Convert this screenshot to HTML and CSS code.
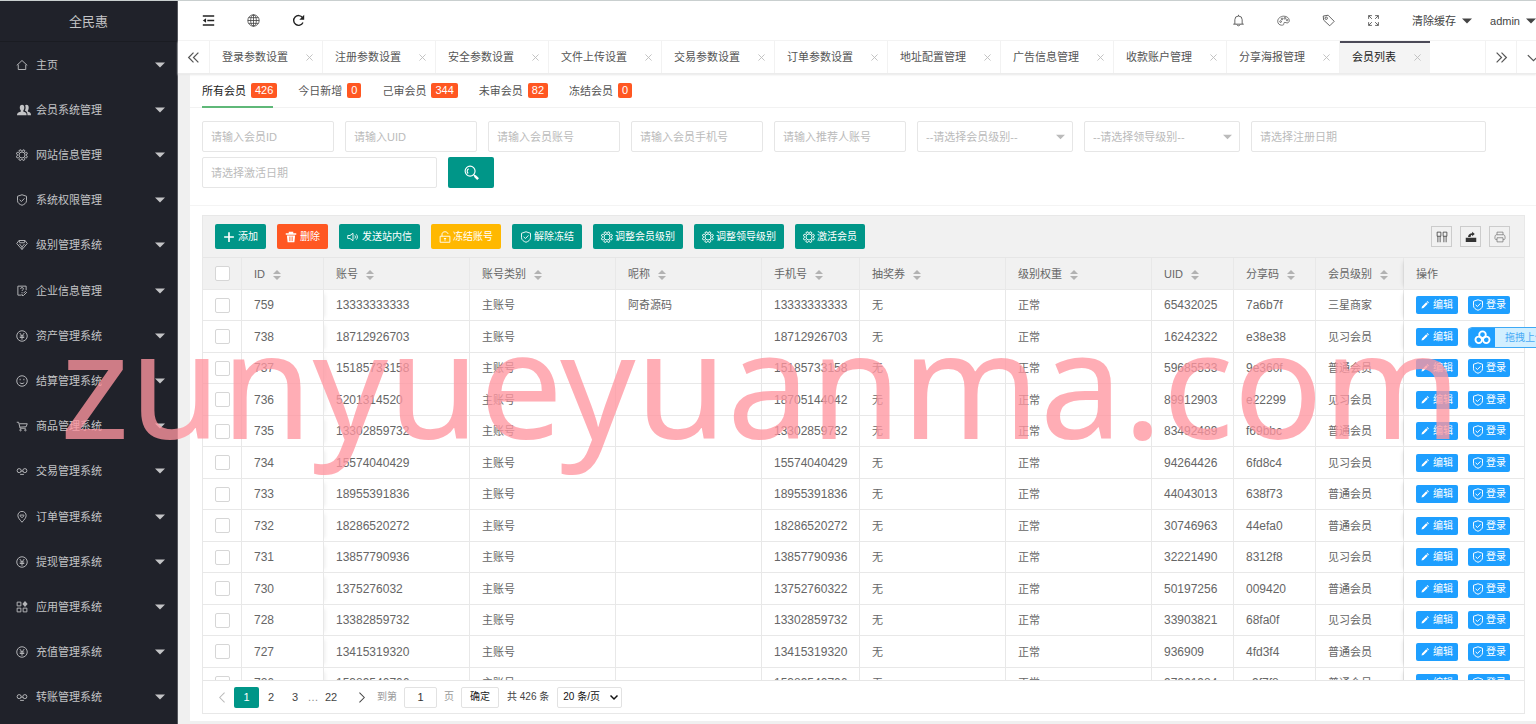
FILE: index.html
```html
<!DOCTYPE html>
<html lang="zh-CN">
<head>
<meta charset="utf-8">
<title>全民惠</title>
<link rel="stylesheet" href="styles.css">
</head>
<body>
<svg class="sprite" aria-hidden="true">
  <symbol id="home" viewBox="0 0 16 16"><path d="M1 8.500 8 2l7 6.500M3 7.500V14h10V7.500"/></symbol>
  <symbol id="users" viewBox="0 0 16 16"><path class="fill" d="M0 14c0-2.500 1-3 4-4 .6-.3.6-1 0-2-1.500-2.500-.8-6 1.800-6s3.300 3.500 1.800 6c-.6 1-.6 1.700 0 2 3 1 3.400 1.500 3.400 4zM12 14h4c0-2.500-.6-3-3.200-4-.6-.3-.6-1 0-2 1.300-2.500.6-6-1.800-6-.8 0-1.300.3-1.700.8 1 2 .5 4.200-.3 5.700 2.200.9 3 2.500 3 5.500z"/></symbol>
  <symbol id="gear" viewBox="0 0 16 16"><circle cx="8" cy="8" r="4"/><path d="m6.500 1 .6 1.800h1.800L9.500 1l2.300 1-.5 1.800 1.200 1.100 1.700-.6 1 2.400-1.700.9v1.100l1.600 1-1 2.300-1.800-.5-1.100 1.100.5 1.700-2.300 1-1-1.600H7.100l-.9 1.600-2.400-1 .6-1.700-1.200-1.100-1.700.5-1-2.300 1.700-1V7.500L.5 6.600l1-2.300 1.800.5 1.100-1.100L3.900 2z"/></symbol>
  <symbol id="shield" viewBox="0 0 16 16"><path d="M8 1 14 3v6c0 3-3 5-6 6-3-1-6-3-6-6V3zM4.800 7.800 7.300 10l4-4.200"/></symbol>
  <symbol id="diamond" viewBox="0 0 16 16"><path d="M4 2h8l3 4-7 8-7-8zM4.500 6.500 8 10.500l3.500-4M4 2l1 3h6l1-3M8 10v4"/></symbol>
  <symbol id="note" viewBox="0 0 16 16"><path d="M13.500 7V1.500h-11v12H7M6 5c0-2 4-2 4 0 0 1.500-2 1.500-2 3M8 9.500V11M14.500 9.500 10 14H8v-2M10 11l3-3"/></symbol>
  <symbol id="yen" viewBox="0 0 16 16"><circle cx="8" cy="8" r="7"/><path d="m5 4 3 4 3-4M5 8h6M5 10h6M8 8v5"/></symbol>
  <symbol id="face" viewBox="0 0 16 16"><circle cx="8" cy="8" r="7"/><path d="M5.500 5v2M10.500 5v2M5 10c1.500 2 4.500 2 6 0"/></symbol>
  <symbol id="cart" viewBox="0 0 16 16"><path d="M1 3h2.500l2 8H13M4.500 5H15l-1.500 4-8.500.5"/><circle cx="6" cy="13.500" r="1"/><circle cx="12.500" cy="13.500" r="1"/></symbol>
  <symbol id="link" viewBox="0 0 16 16"><circle cx="4.200" cy="7.500" r="2.700"/><circle cx="11.800" cy="7.500" r="2.700"/><path d="M6.500 9c1-2 2-2 3 0M5.500 12.500h5"/></symbol>
  <symbol id="pin" viewBox="0 0 16 16"><path d="M8 15C5 11.500 2.500 9 2.500 6a5.500 5.500 0 0 1 11 0c0 3-2.500 5.500-5.500 9z"/><path d="M8 9 5.500 6.500C5.500 4.500 7.500 4.500 8 6c.5-1.500 2.500-1.500 2.500.5z"/></symbol>
  <symbol id="apps" viewBox="0 0 16 16"><path d="M1.500 1.500h5v5h-5zM1.500 9.500h5v5h-5zM9.500 9.500h5v5h-5z"/><path class="fill" d="m12 0 3.500 4L12 8 8.500 4z"/></symbol>
  <symbol id="caret" viewBox="0 0 10 6"><path class="fill" d="M0 .5h10L5 5.500z"/></symbol>
  <symbol id="shrink" viewBox="0 0 16 16"><path d="M1 2.500h14M6.500 8H15M1 13.500h14"/><path class="fill" d="M5 5.300v5.400L1 8z"/></symbol>
  <symbol id="globe" viewBox="0 0 16 16"><circle cx="8" cy="8" r="7"/><ellipse cx="8" cy="8" rx="3.500" ry="7"/><path d="M8 1v14M1 8h14M2 4.500h12M2 11.500h12"/></symbol>
  <symbol id="reload" viewBox="0 0 16 16"><path d="M13.500 10.500A6 6 0 1 1 13 4.500"/><path class="fill" d="M15 1v6H9z"/></symbol>
  <symbol id="bell" viewBox="0 0 16 16"><path d="M1.500 12.500h13M3.500 12.500V7a4.500 4.500 0 0 1 9 0v5.500M8 2.500V1M6 13c.5 2 3.500 2 4 0"/></symbol>
  <symbol id="palette" viewBox="0 0 18 16"><path d="M6.500 14.500C3 14.500 1 12 1 9c0-4 4-7 8.500-7 4 0 7.500 2.500 7.500 6 0 3-2.500 4-4.500 3-2.500-1-3.500 0-3 1.500.4 1.300-1.300 2-3 2z"/><circle cx="5" cy="9.500" r="1.200"/><circle cx="7" cy="5.800" r="1.200"/><circle cx="11" cy="5" r="1.200"/><circle cx="14" cy="7.500" r="1"/></symbol>
  <symbol id="tag" viewBox="0 0 16 16"><path d="m1.500 2.500 6-1 7.500 7.500-5.500 5.500L2 7.500z"/><circle cx="5.200" cy="5.200" r="1.500"/></symbol>
  <symbol id="full" viewBox="0 0 16 16"><path d="M2 6V2h4M2 2l4 4M10 2h4v4M14 2l-4 4M2 10v4h4M2 14l4-4M14 10v4h-4M14 14l-4-4"/></symbol>
  <symbol id="dleft" viewBox="0 0 16 16"><path d="M8 2 2 8l6 6M14 2 8 8l6 6"/></symbol>
  <symbol id="dright" viewBox="0 0 16 16"><path d="m2 2 6 6-6 6M8 2l6 6-6 6"/></symbol>
  <symbol id="down" viewBox="0 0 16 16"><path d="m1 5 7 7 7-7"/></symbol>
  <symbol id="left" viewBox="0 0 16 16"><path d="m11 1-7 7 7 7"/></symbol>
  <symbol id="right" viewBox="0 0 16 16"><path d="m5 1 7 7-7 7"/></symbol>
  <symbol id="x" viewBox="0 0 16 16"><path d="m1 1 14 14M15 1 1 15"/></symbol>
  <symbol id="search" viewBox="0 0 16 16"><circle cx="6.500" cy="6.500" r="5.300"/><path d="M4.500 9A3 3 0 0 1 5 4M10 10l2 2"/><path d="m11.500 11.500 3.500 3.500" stroke-width="2.600"/></symbol>
  <symbol id="plus" viewBox="0 0 16 16"><path stroke-width="2.200" d="M8 1.500v13M1.500 8h13"/></symbol>
  <symbol id="trash" viewBox="0 0 16 16"><path class="fill" d="M5 1h6v2h4v2H1V3h4zM2.500 6h11L12.500 15h-9z"/><path class="cut" d="M6.500 7.500v6M9.500 7.500v6"/></symbol>
  <symbol id="speaker" viewBox="0 0 16 16"><path d="M1 6h3L8 3v10L4 10H1zM10.500 6c1 1.200 1 2.800 0 4M12.500 4.500c1.800 2 1.800 5 0 7"/></symbol>
  <symbol id="lock" viewBox="0 0 16 16"><path d="M1.500 7h13v8h-13zM4 7V4c0-4 8-4 8 0M8 9.500V13M6.500 10h3"/></symbol>
  <symbol id="pen" viewBox="0 0 16 16"><path class="fill" d="m1 15 1-4 8.500-8.500 3 3L5 14zM11.500 1.500 12.800.2l3 3-1.300 1.300z"/></symbol>
  <symbol id="cols" viewBox="0 0 16 16"><path d="M1.500 1.500h5V7h-5zM9.500 1.500h5V7h-5zM2.500 7v8M5.500 7v8M10.500 7v8M13.500 7v8"/></symbol>
  <symbol id="export" viewBox="0 0 16 16"><path class="fill" d="M1 9h14v5.500H1zM9.500 1 13 4l-3.500 3V5.200C8 5.200 7.500 6 7.500 8H4c.5-3.500 2.500-5 5.500-5z"/></symbol>
  <symbol id="print" viewBox="0 0 16 16"><path d="M4 5V1.500h8V5M4 11.500H2.500c-2 0-1.500-6.500.5-6.500h10c2 0 2.500 6.500.5 6.500H12M4 9h8v5.500H4z"/></symbol>
  <symbol id="sort" viewBox="0 0 8 12"><path class="fill" d="M0 5 4 1l4 4zM0 7h8l-4 4z"/></symbol>
  <symbol id="cloud" viewBox="0 0 18 16"><circle cx="9" cy="5" r="3.500"/><circle cx="5" cy="10.500" r="3.500"/><circle cx="13" cy="10.500" r="3.500"/></symbol>
</svg>

<div class="app">
  <aside class="side">
    <div class="brand">全民惠</div>
    <nav class="menu">
      <a href="#"><svg class="ico"><use href="#home"/></svg><span>主页</span><svg class="caret"><use href="#caret"/></svg></a>
      <a href="#"><svg class="ico wide"><use href="#users"/></svg><span>会员系统管理</span><svg class="caret"><use href="#caret"/></svg></a>
      <a href="#"><svg class="ico"><use href="#gear"/></svg><span>网站信息管理</span><svg class="caret"><use href="#caret"/></svg></a>
      <a href="#"><svg class="ico"><use href="#shield"/></svg><span>系统权限管理</span><svg class="caret"><use href="#caret"/></svg></a>
      <a href="#"><svg class="ico"><use href="#diamond"/></svg><span>级别管理系统</span><svg class="caret"><use href="#caret"/></svg></a>
      <a href="#"><svg class="ico"><use href="#note"/></svg><span>企业信息管理</span><svg class="caret"><use href="#caret"/></svg></a>
      <a href="#"><svg class="ico"><use href="#yen"/></svg><span>资产管理系统</span><svg class="caret"><use href="#caret"/></svg></a>
      <a href="#"><svg class="ico"><use href="#face"/></svg><span>结算管理系统</span><svg class="caret"><use href="#caret"/></svg></a>
      <a href="#"><svg class="ico"><use href="#cart"/></svg><span>商品管理系统</span><svg class="caret"><use href="#caret"/></svg></a>
      <a href="#"><svg class="ico"><use href="#link"/></svg><span>交易管理系统</span><svg class="caret"><use href="#caret"/></svg></a>
      <a href="#"><svg class="ico"><use href="#pin"/></svg><span>订单管理系统</span><svg class="caret"><use href="#caret"/></svg></a>
      <a href="#"><svg class="ico"><use href="#yen"/></svg><span>提现管理系统</span><svg class="caret"><use href="#caret"/></svg></a>
      <a href="#"><svg class="ico"><use href="#apps"/></svg><span>应用管理系统</span><svg class="caret"><use href="#caret"/></svg></a>
      <a href="#"><svg class="ico"><use href="#yen"/></svg><span>充值管理系统</span><svg class="caret"><use href="#caret"/></svg></a>
      <a href="#"><svg class="ico"><use href="#link"/></svg><span>转账管理系统</span><svg class="caret"><use href="#caret"/></svg></a>
    </nav>
  </aside>

  <div class="main">
    <header class="top">
      <button aria-label="收起菜单"><svg class="bold"><use href="#shrink"/></svg></button>
      <button aria-label="网站"><svg><use href="#globe"/></svg></button>
      <button aria-label="刷新"><svg class="bold"><use href="#reload"/></svg></button>
      <span class="grow"></span>
      <button aria-label="消息"><svg><use href="#bell"/></svg></button>
      <button aria-label="主题"><svg><use href="#palette"/></svg></button>
      <button aria-label="便签"><svg><use href="#tag"/></svg></button>
      <button aria-label="全屏"><svg><use href="#full"/></svg></button>
      <a class="drop first" href="#">清除缓存<svg><use href="#caret"/></svg></a>
      <a class="drop" href="#">admin<svg><use href="#caret"/></svg></a>
    </header>

    <div class="tabs">
      <button class="arrow" aria-label="向左"><svg><use href="#dleft"/></svg></button>
      <a class="tab" href="#">登录参数设置<svg><use href="#x"/></svg></a>
      <a class="tab" href="#">注册参数设置<svg><use href="#x"/></svg></a>
      <a class="tab" href="#">安全参数设置<svg><use href="#x"/></svg></a>
      <a class="tab" href="#">文件上传设置<svg><use href="#x"/></svg></a>
      <a class="tab" href="#">交易参数设置<svg><use href="#x"/></svg></a>
      <a class="tab" href="#">订单参数设置<svg><use href="#x"/></svg></a>
      <a class="tab" href="#">地址配置管理<svg><use href="#x"/></svg></a>
      <a class="tab" href="#">广告信息管理<svg><use href="#x"/></svg></a>
      <a class="tab" href="#">收款账户管理<svg><use href="#x"/></svg></a>
      <a class="tab" href="#">分享海报管理<svg><use href="#x"/></svg></a>
      <a class="tab on" href="#">会员列表<svg><use href="#x"/></svg></a>
      <span class="grow"></span>
      <button class="arrow" aria-label="向右"><svg><use href="#dright"/></svg></button>
      <button class="arrow last" aria-label="更多"><svg><use href="#down"/></svg></button>
    </div>

    <main class="panel">
      <div class="kinds">
        <a class="on" href="#">所有会员<b>426</b></a>
        <a href="#">今日新增<b>0</b></a>
        <a href="#">己审会员<b>344</b></a>
        <a href="#">未审会员<b>82</b></a>
        <a href="#">冻结会员<b>0</b></a>
      </div>

      <form class="filters">
        <input class="w1" placeholder="请输入会员ID" aria-label="会员ID">
        <input class="w1" placeholder="请输入UID" aria-label="UID">
        <input class="w1" placeholder="请输入会员账号" aria-label="会员账号">
        <input class="w1" placeholder="请输入会员手机号" aria-label="会员手机号">
        <input class="w1" placeholder="请输入推荐人账号" aria-label="推荐人账号">
        <span class="pick"><select aria-label="会员级别"><option>--请选择会员级别--</option></select><svg><use href="#caret"/></svg></span>
        <span class="pick"><select aria-label="领导级别"><option>--请选择领导级别--</option></select><svg><use href="#caret"/></svg></span>
        <input class="w2" placeholder="请选择注册日期" aria-label="注册日期">
        <input class="w2" placeholder="请选择激活日期" aria-label="激活日期">
        <button type="button" class="find" aria-label="搜索"><svg><use href="#search"/></svg></button>
      </form>

      <section class="grid">
        <div class="tools">
          <button class="btn"><svg><use href="#plus"/></svg>添加</button>
          <button class="btn red"><svg><use href="#trash"/></svg>删除</button>
          <button class="btn"><svg><use href="#speaker"/></svg>发送站内信</button>
          <button class="btn amber"><svg><use href="#lock"/></svg>冻结账号</button>
          <button class="btn"><svg><use href="#shield"/></svg>解除冻结</button>
          <button class="btn"><svg><use href="#gear"/></svg>调整会员级别</button>
          <button class="btn"><svg><use href="#gear"/></svg>调整领导级别</button>
          <button class="btn"><svg><use href="#gear"/></svg>激活会员</button>
          <span class="grow"></span>
          <button class="sq" aria-label="筛选列"><svg><use href="#cols"/></svg></button>
          <button class="sq" aria-label="导出"><svg><use href="#export"/></svg></button>
          <button class="sq" aria-label="打印"><svg><use href="#print"/></svg></button>
        </div>

        <div class="scroll">
          <table>
            <colgroup><col class="c-check"><col class="c-s"><col class="c-l"><col class="c-l"><col class="c-l"><col class="c-m"><col class="c-l"><col class="c-l"><col class="c-s"><col class="c-s"><col class="c-lv"><col class="c-act"></colgroup>
            <thead>
              <tr><th><input type="checkbox" aria-label="全选"></th><th>ID<svg><use href="#sort"/></svg></th><th>账号<svg><use href="#sort"/></svg></th><th>账号类别<svg><use href="#sort"/></svg></th><th>呢称<svg><use href="#sort"/></svg></th><th>手机号<svg><use href="#sort"/></svg></th><th>抽奖券<svg><use href="#sort"/></svg></th><th>级别权重<svg><use href="#sort"/></svg></th><th>UID<svg><use href="#sort"/></svg></th><th>分享码<svg><use href="#sort"/></svg></th><th>会员级别<svg><use href="#sort"/></svg></th><th>操作</th></tr>
            </thead>
            <tbody>
              <tr><td><input type="checkbox" aria-label="759"></td><td>759</td><td>13333333333</td><td>主账号</td><td>阿奇源码</td><td>13333333333</td><td>无</td><td>正常</td><td>65432025</td><td>7a6b7f</td><td>三星商家</td><td><button class="act"><svg><use href="#pen"/></svg>编辑</button><button class="act sh"><svg><use href="#shield"/></svg>登录</button></td></tr>
              <tr><td><input type="checkbox" aria-label="738"></td><td>738</td><td>18712926703</td><td>主账号</td><td></td><td>18712926703</td><td>无</td><td>正常</td><td>16242322</td><td>e38e38</td><td>见习会员</td><td><button class="act"><svg><use href="#pen"/></svg>编辑</button><button class="act sh"><svg><use href="#shield"/></svg>登录</button></td></tr>
              <tr><td><input type="checkbox" aria-label="737"></td><td>737</td><td>15185733158</td><td>主账号</td><td></td><td>15185733158</td><td>无</td><td>正常</td><td>59685533</td><td>9e360f</td><td>普通会员</td><td><button class="act"><svg><use href="#pen"/></svg>编辑</button><button class="act sh"><svg><use href="#shield"/></svg>登录</button></td></tr>
              <tr><td><input type="checkbox" aria-label="736"></td><td>736</td><td>5201314520</td><td>主账号</td><td></td><td>18705144042</td><td>无</td><td>正常</td><td>89912903</td><td>e22299</td><td>见习会员</td><td><button class="act"><svg><use href="#pen"/></svg>编辑</button><button class="act sh"><svg><use href="#shield"/></svg>登录</button></td></tr>
              <tr><td><input type="checkbox" aria-label="735"></td><td>735</td><td>13302859732</td><td>主账号</td><td></td><td>13302859732</td><td>无</td><td>正常</td><td>83492489</td><td>f69bbc</td><td>普通会员</td><td><button class="act"><svg><use href="#pen"/></svg>编辑</button><button class="act sh"><svg><use href="#shield"/></svg>登录</button></td></tr>
              <tr><td><input type="checkbox" aria-label="734"></td><td>734</td><td>15574040429</td><td>主账号</td><td></td><td>15574040429</td><td>无</td><td>正常</td><td>94264426</td><td>6fd8c4</td><td>见习会员</td><td><button class="act"><svg><use href="#pen"/></svg>编辑</button><button class="act sh"><svg><use href="#shield"/></svg>登录</button></td></tr>
              <tr><td><input type="checkbox" aria-label="733"></td><td>733</td><td>18955391836</td><td>主账号</td><td></td><td>18955391836</td><td>无</td><td>正常</td><td>44043013</td><td>638f73</td><td>普通会员</td><td><button class="act"><svg><use href="#pen"/></svg>编辑</button><button class="act sh"><svg><use href="#shield"/></svg>登录</button></td></tr>
              <tr><td><input type="checkbox" aria-label="732"></td><td>732</td><td>18286520272</td><td>主账号</td><td></td><td>18286520272</td><td>无</td><td>正常</td><td>30746963</td><td>44efa0</td><td>普通会员</td><td><button class="act"><svg><use href="#pen"/></svg>编辑</button><button class="act sh"><svg><use href="#shield"/></svg>登录</button></td></tr>
              <tr><td><input type="checkbox" aria-label="731"></td><td>731</td><td>13857790936</td><td>主账号</td><td></td><td>13857790936</td><td>无</td><td>正常</td><td>32221490</td><td>8312f8</td><td>见习会员</td><td><button class="act"><svg><use href="#pen"/></svg>编辑</button><button class="act sh"><svg><use href="#shield"/></svg>登录</button></td></tr>
              <tr><td><input type="checkbox" aria-label="730"></td><td>730</td><td>1375276032</td><td>主账号</td><td></td><td>13752760322</td><td>无</td><td>正常</td><td>50197256</td><td>009420</td><td>普通会员</td><td><button class="act"><svg><use href="#pen"/></svg>编辑</button><button class="act sh"><svg><use href="#shield"/></svg>登录</button></td></tr>
              <tr><td><input type="checkbox" aria-label="728"></td><td>728</td><td>13382859732</td><td>主账号</td><td></td><td>13302859732</td><td>无</td><td>正常</td><td>33903821</td><td>68fa0f</td><td>见习会员</td><td><button class="act"><svg><use href="#pen"/></svg>编辑</button><button class="act sh"><svg><use href="#shield"/></svg>登录</button></td></tr>
              <tr><td><input type="checkbox" aria-label="727"></td><td>727</td><td>13415319320</td><td>主账号</td><td></td><td>13415319320</td><td>无</td><td>正常</td><td>936909</td><td>4fd3f4</td><td>普通会员</td><td><button class="act"><svg><use href="#pen"/></svg>编辑</button><button class="act sh"><svg><use href="#shield"/></svg>登录</button></td></tr>
              <tr><td><input type="checkbox" aria-label="726"></td><td>726</td><td>15389540706</td><td>主账号</td><td></td><td>15389540706</td><td>无</td><td>正常</td><td>97061984</td><td>c9f7f8</td><td>普通会员</td><td><button class="act"><svg><use href="#pen"/></svg>编辑</button><button class="act sh"><svg><use href="#shield"/></svg>登录</button></td></tr>
            </tbody>
          </table>
        </div>

        <div class="pager">
          <button class="pg off" aria-label="上一页"><svg><use href="#left"/></svg></button>
          <button class="pg on">1</button>
          <button class="pg">2</button>
          <button class="pg">3</button>
          <span class="dots">…</span>
          <button class="pg">22</button>
          <button class="pg next" aria-label="下一页"><svg><use href="#right"/></svg></button>
          <label class="jump">到第<input value="1">页</label>
          <button class="ok">确定</button>
          <span class="total">共 426 条</span>
          <span class="size"><select aria-label="每页条数"><option>20 条/页</option></select><svg><use href="#down"/></svg></span>
        </div>
      </section>
    </main>
  </div>

  <button class="upload"><span class="mark"><svg><use href="#cloud"/></svg></span>拖拽上传</button>
  <div class="watermark" aria-hidden="true">zunyueyuanma.com</div>
</div>
</body>
</html>
```

FILE: styles.css
```css
* { box-sizing: border-box; }
body {
  margin: 0;
  font: 11px/16px "Liberation Sans", "Noto Sans CJK SC", sans-serif;
  color: #555;
}
a { color: inherit; text-decoration: none; }
button, input, select { font: inherit; color: inherit; margin: 0; }
button { border: 0; background: none; padding: 0; display: inline-flex; align-items: center; justify-content: center; }
svg { fill: none; stroke: currentColor; stroke-width: 1; flex: none; }
.fill { fill: currentColor; stroke: none; }
.sprite { position: absolute; width: 0; height: 0; }
.grow { flex: 1; }

.app { position: relative; display: flex; height: 100vh; overflow: hidden; border-top: 1px solid #c9cfcf; }

/* sidebar */
.side { width: 178px; flex: none; display: flex; flex-direction: column; background: #20222a; color: #c3c4c6; padding-bottom: 4px; border-right: 1px solid #55575d; }
.brand { height: 41px; line-height: 41px; text-align: center; font-size: 13px; border-bottom: 1px solid #1a1c22; }
.menu { flex: 1; display: flex; flex-direction: column; }
.menu a { flex: 1; display: flex; align-items: center; padding: 0 12px 0 16px; }
.menu span { flex: 1; }
.ico { width: 12px; height: 12px; margin-right: 8px; color: #b4b5b8; stroke-width: 1.3; }
.wide { width: 16px; height: 14px; margin-right: 4px; color: #c3c4c6; }
.caret { width: 10px; height: 6px; }

/* header */
.main { flex: 1; min-width: 0; display: flex; flex-direction: column; background: #f0f0f0; }
.top { display: flex; height: 40px; flex: none; background: #fff; padding-left: 8px; border-bottom: 1px solid #f4f4f4; color: #444; }
.top button { width: 45px; }
.top button svg { width: 13px; height: 13px; }
.top .bold { stroke-width: 1.7; color: #222; }
.drop { display: flex; align-items: center; gap: 6px; padding-left: 18px; }
.drop.first { padding-left: 16px; }
.drop svg { width: 10px; height: 6px; }

.tabs { display: flex; height: 33px; flex: none; background: #fff; border-bottom: 1px solid #ececec; box-shadow: 0 1px 2px #e8e8e8; position: relative; }
.arrow { width: 32px; border-right: 1px solid #f2f2f2; color: #555; }
.arrow svg { width: 13px; height: 13px; stroke-width: 1.5; }
.grow + .arrow { border-left: 1px solid #f2f2f2; }
.arrow.last { border: 0; width: 19px; justify-content: flex-start; padding-left: 10px; }
.tab { flex: none; width: 113px; display: flex; align-items: center; justify-content: space-between; padding: 0 9px 0 12px; border-right: 1px solid #f2f2f2; }
.tab svg { width: 7px; height: 7px; color: #bbb; stroke-width: 2; }
.tab.on { width: 90px; background: #f4f4f4; color: #222; border: 0; box-shadow: inset 0 2px #4b4957; }

/* content */
.panel { flex: 1; min-height: 0; display: flex; flex-direction: column; margin: 0 0 3px 12px; background: #fff; }
.kinds { display: flex; gap: 21px; height: 34px; flex: none; padding-left: 12px; border-bottom: 1px solid #f2f2f2; }
.kinds a { position: relative; display: flex; align-items: center; gap: 5px; }
.kinds .on { color: #222; }
.kinds .on::after { content: ""; position: absolute; left: 0; right: 4px; bottom: -1px; height: 2px; background: #5fb878; }
.kinds b { font-weight: 400; line-height: 15px; padding: 0 4px; color: #fff; background: #ff5722; border-radius: 2px; }

.filters { display: flex; flex-wrap: wrap; gap: 5px 11px; padding: 13px 12px 17px; border-bottom: 1px solid #f4f4f4; }
.filters input, .filters select { height: 31px; border: 1px solid #e6e6e6; border-radius: 2px; padding: 0 8px; background: #fff; outline: 0; }
.filters input::placeholder, .filters select { color: #bbb; opacity: 1; }
.filters .w1 { width: 132px; }
.filters .w2 { width: 235px; }
.pick, .size { display: grid; align-items: center; }
.pick > *, .size > * { grid-area: 1 / 1; }
.pick select { appearance: none; width: 156px; }
.pick svg { justify-self: end; width: 9px; height: 6px; margin-right: 8px; color: #bbb; pointer-events: none; }
.find { width: 46px; height: 31px; background: #009688; color: #fff; border-radius: 2px; }
.find svg { width: 15px; height: 15px; stroke-width: 1.2; }

.grid { flex: 1; min-height: 0; display: flex; flex-direction: column; margin: 9px 11px 7px 12px; border: 1px solid #e8e8e8; }
.tools { display: flex; align-items: center; gap: 11px; height: 42px; flex: none; padding: 0 14px 0 12px; background: #f1f1f1; border-bottom: 1px solid #e6e6e6; }
.btn { height: 25px; padding: 0 8px; gap: 3px; font-size: 10px; color: #fff; background: #009688; border-radius: 2px; white-space: nowrap; }
.btn:nth-child(n+4) { gap: 2px; }
.btn svg { width: 12px; height: 12px; stroke-width: 1.2; }
.btn.red { background: #ff5722; }
.btn.amber { background: #ffb800; }
.cut { stroke: #ff5722; }
.sq { width: 21px; height: 21px; border: 1px solid #ccc; color: #333; margin-right: -3px; }
.sq svg { width: 12px; height: 12px; }
.sq:last-child { margin-right: 0; color: #777; }

.scroll { flex: 1; min-height: 0; overflow: hidden; }
table { width: 100%; table-layout: fixed; border-collapse: separate; border-spacing: 0; color: #666; }
.c-check { width: 39px; }
.c-s { width: 82px; }
.c-m { width: 98px; }
.c-l { width: 146px; }
.c-lv { width: 88px; }
.c-act { width: 121px; }
th, td { height: 32px; padding: 0 0 0 12px; text-align: left; font-weight: 400; border-right: 1px solid #e8e8e8; border-bottom: 1px solid #e8e8e8; white-space: nowrap; }
tbody tr:nth-child(odd) td { height: 31px; }
th { background: #f1f1f1; }
th svg { width: 8px; height: 12px; margin-left: 8px; color: #b2b2b2; vertical-align: middle; }
td:nth-child(2), td:nth-child(3), td:nth-child(6), td:nth-child(9), td:nth-child(10) { font-size: 12px; }
th:nth-child(2), td:nth-child(2) { box-shadow: 5px 0 4px -4px rgba(0, 0, 0, .08); }
th:last-child, td:last-child { border-right: 0; box-shadow: -5px 0 4px -4px rgba(0, 0, 0, .1); }
input[type="checkbox"] { appearance: none; display: block; width: 15px; height: 15px; border: 1px solid #d6d6d6; border-radius: 2px; background: #fff; }
.act { width: 42px; height: 18px; gap: 4px; font-size: 10px; color: #fff; background: #1e9fff; border-radius: 2px; vertical-align: middle; }
.act svg { width: 8px; height: 8px; }
.act + .act { margin-left: 10px; gap: 2px; }
.act.sh svg { width: 12px; height: 12px; stroke-width: 1.3; }

.pager { display: flex; align-items: center; height: 33px; flex: none; padding-left: 7px; border-top: 1px solid #e6e6e6; color: #444; }
.pg { width: 24px; height: 21px; }
.pg svg { width: 11px; height: 11px; stroke-width: 1.5; }
.pg.off { color: #bbb; }
.pg.on { width: 25px; background: #009688; color: #fff; border-radius: 2px; }
.dots { width: 12px; text-align: center; color: #888; }
.pg.next { width: 34px; padding-left: 2px; }
.jump { display: flex; align-items: center; gap: 7px; color: #999; font-size: 10px; }
.jump input { width: 33px; height: 21px; padding: 0; text-align: center; font-size: 11px; border: 1px solid #e2e2e2; border-radius: 2px; color: #333; }
.ok { width: 38px; height: 21px; margin: 0 8px 0 7px; border: 1px solid #e2e2e2; border-radius: 2px; font-size: 10px; color: #222; }
.total { font-size: 10px; }
.size { margin-left: 8px; }
.size select { appearance: none; width: 65px; height: 21px; padding: 0 5px; border: 1px solid #e2e2e2; border-radius: 2px; background: #fff; color: #111; font-size: 10px; }
.size svg { justify-self: end; width: 8px; height: 8px; margin-right: 4px; stroke-width: 3; color: #111; pointer-events: none; }

/* overlays */
.upload { position: absolute; right: -24px; top: 326px; width: 92px; height: 21px; justify-content: flex-start; gap: 10px; overflow: hidden; font-size: 10px; color: #4aabf5; background: #d2efff; border: 1px solid #3fa9f5; border-radius: 4px; }
.mark { display: flex; align-items: center; justify-content: center; width: 26px; height: 21px; background: #1e9fff; color: #fff; }
.mark svg { width: 17px; height: 15px; stroke-width: 2; }
.watermark { position: absolute; left: 60px; top: 281px; font: 148px/200px "Noto Sans", "Open Sans", sans-serif; color: rgba(255, 150, 160, .78); white-space: nowrap; pointer-events: none; }
```
